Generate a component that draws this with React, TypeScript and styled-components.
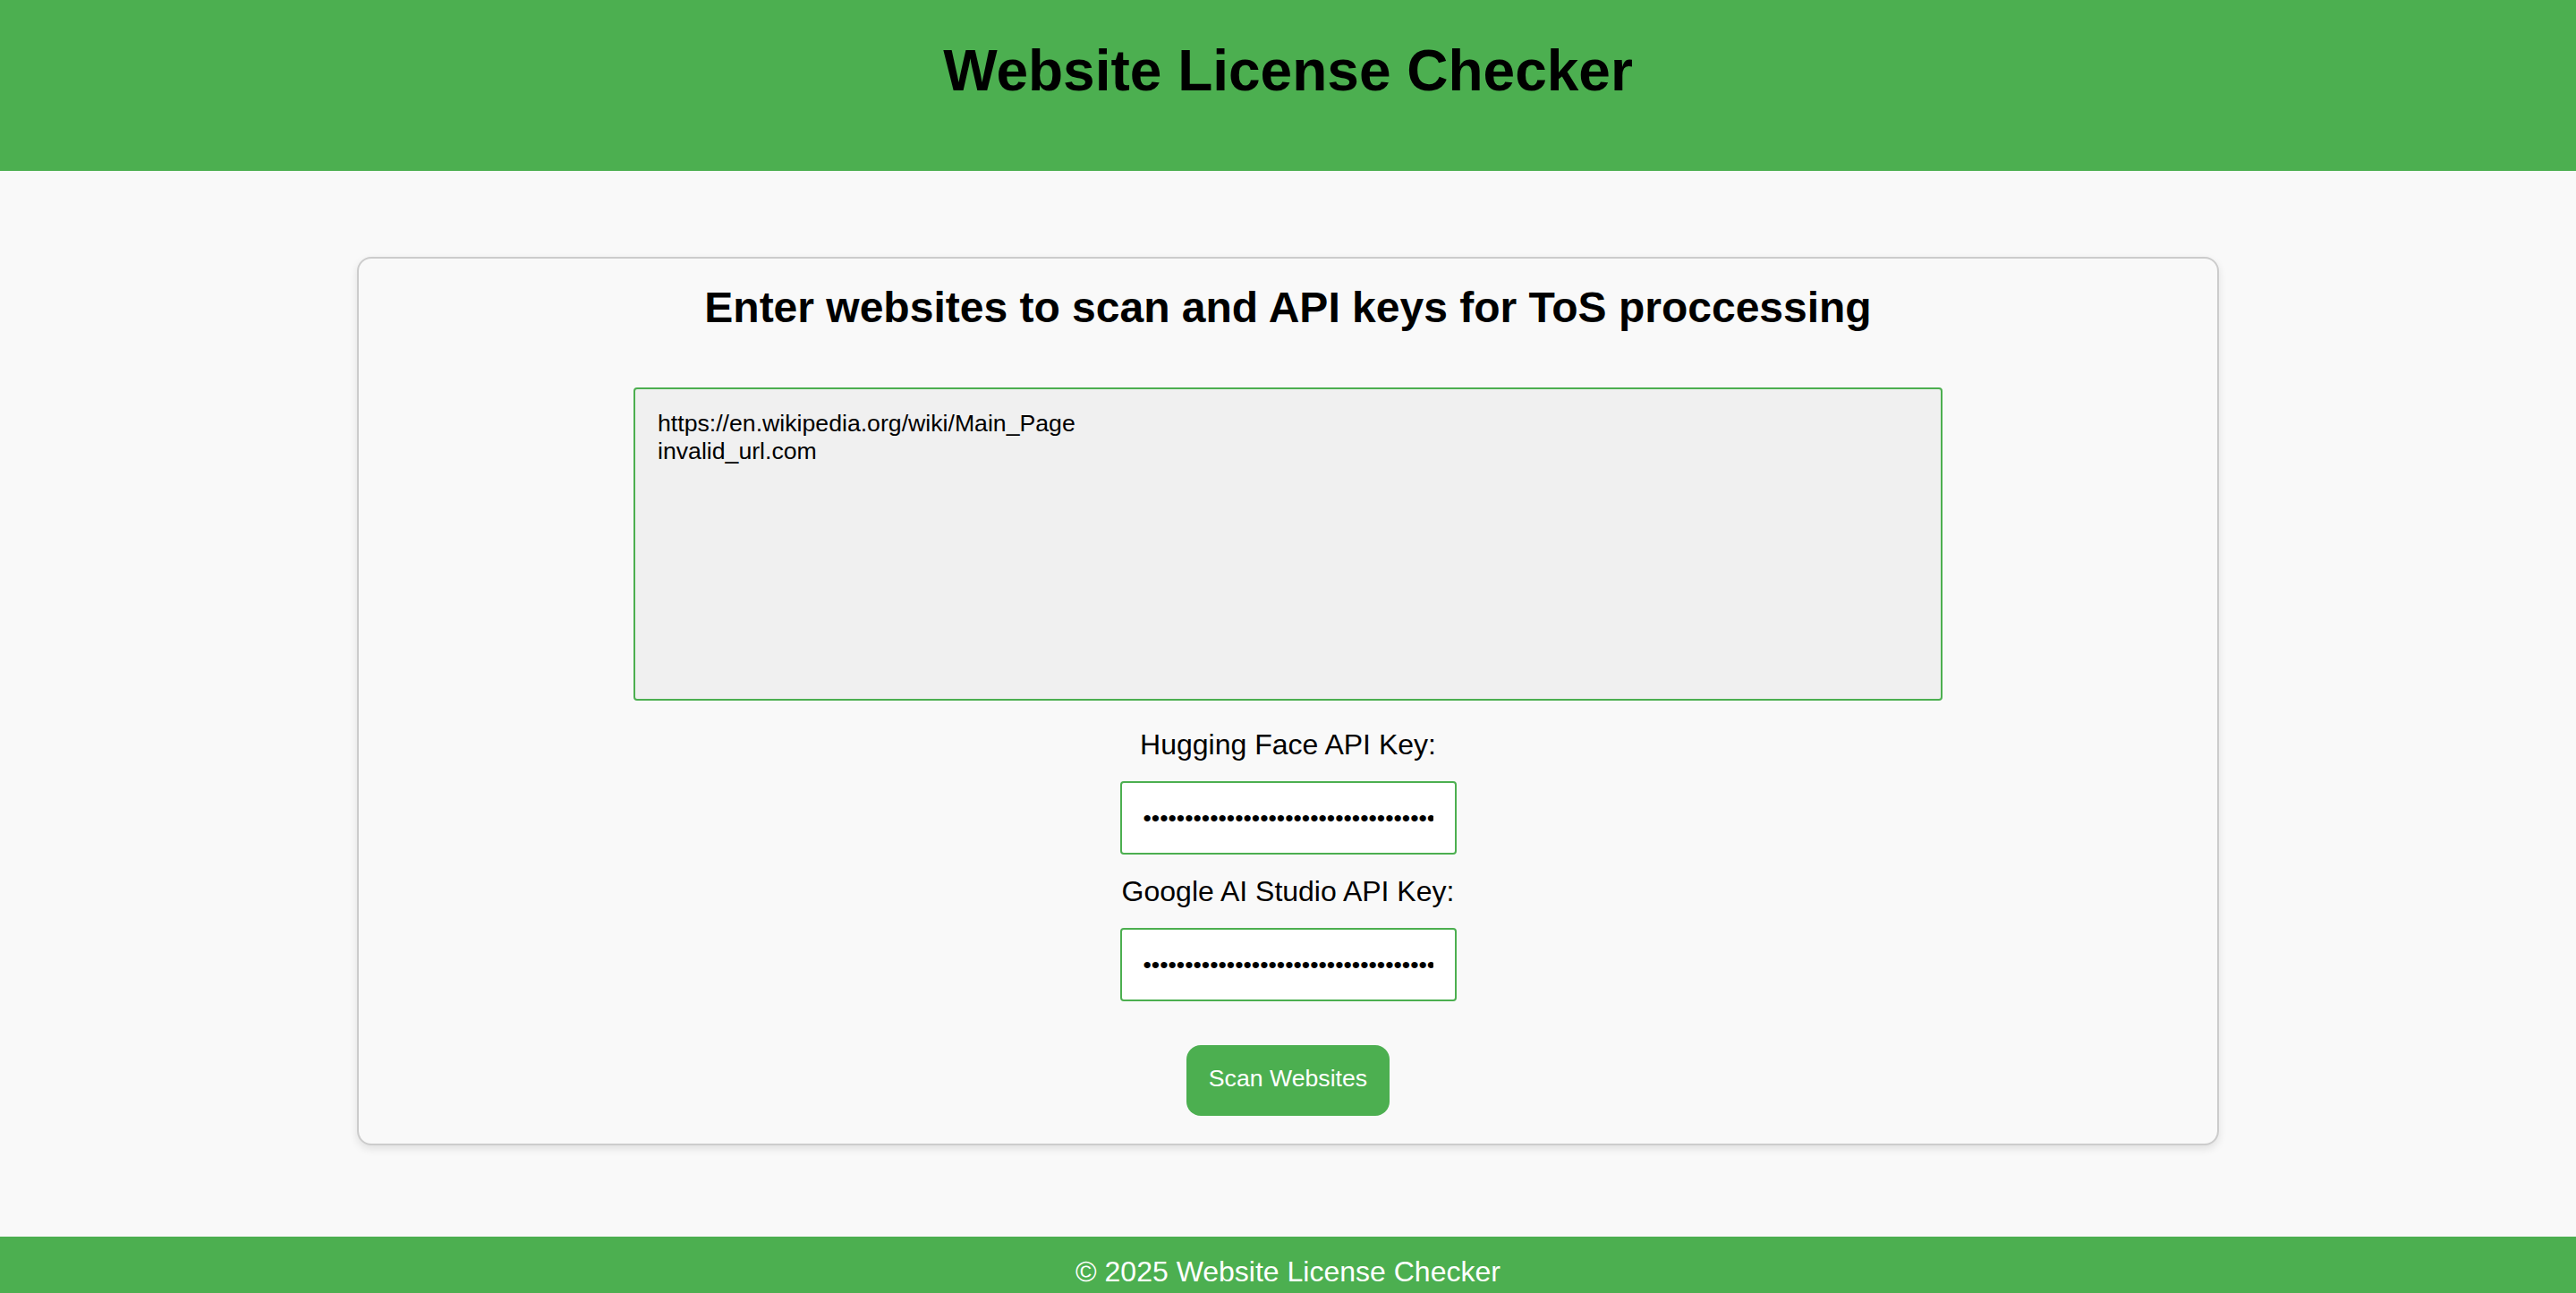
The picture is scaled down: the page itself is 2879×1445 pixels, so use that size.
import React from "react";
import styled, { createGlobalStyle } from "styled-components";

const GREEN = "#4CAF50";

const GlobalStyle = createGlobalStyle`
  html, body {
    margin: 0;
    padding: 0;
    background: #f9f9f9;
    font-family: "Liberation Sans", Arial, sans-serif;
    color: #000;
  }
  * { box-sizing: border-box; }
`;

const Page = styled.div`
  display: flex;
  flex-direction: column;
  min-height: 100vh;
`;

const Header = styled.header`
  background: ${GREEN};
  padding: 42px 0 75px;
  text-align: center;
`;

const Title = styled.h1`
  margin: 0;
  font-size: 64px;
  line-height: 74px;
  font-weight: 700;
  color: #000;
`;

const Main = styled.main`
  flex: 1;
  padding: 96px 0 102px;
`;

const Card = styled.section`
  width: 2081px;
  margin: 0 auto;
  background: #f9f9f9;
  border: 2px solid #ccc;
  border-radius: 16px;
  box-shadow: 0 4px 10px rgba(0, 0, 0, 0.1);
  padding: 27px 30px 31px;
  display: flex;
  flex-direction: column;
  align-items: center;
`;

const CardTitle = styled.h2`
  margin: 0 0 62px;
  font-size: 48px;
  line-height: 55px;
  font-weight: 700;
  text-align: center;
`;

const UrlArea = styled.textarea`
  width: 1463px;
  height: 350px;
  background: #f0f0f0;
  border: 2px solid ${GREEN};
  border-radius: 4px;
  padding: 23px 25px;
  font-family: "Liberation Sans", Arial, sans-serif;
  font-size: 26.67px;
  line-height: normal;
  color: #000;
  resize: none;
  outline: none;
  display: block;
`;

const Label = styled.label<{ $gap: number }>`
  display: block;
  margin-top: ${(p) => p.$gap}px;
  font-size: 32px;
  line-height: 37px;
  text-align: center;
`;

const KeyInput = styled.input`
  display: block;
  width: 376px;
  height: 82px;
  margin-top: 22px;
  padding: 0 24px;
  background: #fff;
  border: 2px solid ${GREEN};
  border-radius: 4px;
  font-family: "Liberation Sans", Arial, sans-serif;
  font-size: 26.67px;
  color: #000;
  outline: none;
`;

const ScanButton = styled.button`
  margin-top: 49px;
  height: 79px;
  padding: 0 25px 4px;
  background: ${GREEN};
  color: #fff;
  border: none;
  border-radius: 16px;
  font-family: "Liberation Sans", Arial, sans-serif;
  font-size: 26.67px;
  line-height: normal;
  cursor: pointer;
`;

const Footer = styled.footer`
  background: ${GREEN};
  color: #fff;
  text-align: center;
  padding: 21px 0 18px;
  font-size: 32px;
  line-height: 37px;
`;

export default function App() {
  return (
    <>
      <GlobalStyle />
      <Page>
        <Header>
          <Title>Website License Checker</Title>
        </Header>
        <Main>
          <Card>
            <CardTitle>Enter websites to scan and API keys for ToS proccessing</CardTitle>
            <UrlArea
              defaultValue={"https://en.wikipedia.org/wiki/Main_Page\ninvalid_url.com"}
            />
            <Label $gap={31} htmlFor="hf">Hugging Face API Key:</Label>
            <KeyInput id="hf" type="password" defaultValue="hf_abcdefghijklmnopqrstuvwxyz0123456789AB" />
            <Label $gap={23} htmlFor="gai">Google AI Studio API Key:</Label>
            <KeyInput id="gai" type="password" defaultValue="AIzaSyAbcdefghijklmnopqrstuvwxyz012345678" />
            <ScanButton type="button">Scan Websites</ScanButton>
          </Card>
        </Main>
        <Footer>© 2025 Website License Checker</Footer>
      </Page>
    </>
  );
}
